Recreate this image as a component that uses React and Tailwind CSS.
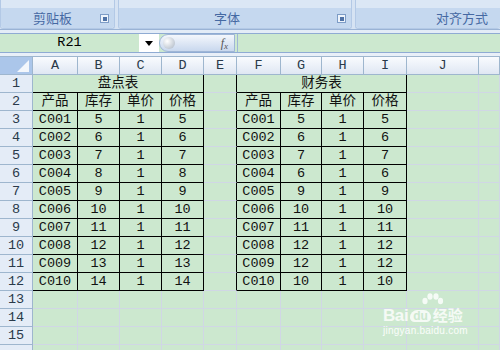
import React from "react";

const left = [
  ["C001", 5, 1, 5],
  ["C002", 6, 1, 6],
  ["C003", 7, 1, 7],
  ["C004", 8, 1, 8],
  ["C005", 9, 1, 9],
  ["C006", 10, 1, 10],
  ["C007", 11, 1, 11],
  ["C008", 12, 1, 12],
  ["C009", 13, 1, 13],
  ["C010", 14, 1, 14],
];

const right = [
  ["C001", 5, 1, 5],
  ["C002", 6, 1, 6],
  ["C003", 7, 1, 7],
  ["C004", 6, 1, 6],
  ["C005", 9, 1, 9],
  ["C006", 10, 1, 10],
  ["C007", 11, 1, 11],
  ["C008", 12, 1, 12],
  ["C009", 12, 1, 12],
  ["C010", 10, 1, 10],
];

const letters = ["A", "B", "C", "D", "E", "F", "G", "H", "I", "J", ""];

function Cell({ children, r, b, span }) {
  return (
    <div
      className={`flex items-center justify-center border-r border-b bg-[#cce8cf] text-[13.5px] text-[#111] leading-none whitespace-nowrap ${
        r ? "border-r-black" : "border-r-[#d0d7e5]"
      } ${b ? "border-b-black" : "border-b-[#d0d7e5]"} ${span ? "col-span-4" : ""}`}
    >
      {children}
    </div>
  );
}

function RowHead({ n }) {
  return (
    <div className="flex items-center justify-center border-r border-b border-[#9eb6ce] bg-[#e4ecf7] text-[13.5px] text-[#2a3a4a] leading-none">
      {n}
    </div>
  );
}

function Launcher() {
  return (
    <svg width="9" height="9" viewBox="0 0 9 9" className="ml-auto">
      <rect x="0.5" y="0.5" width="8" height="8" fill="#eef4fb" stroke="#7d9cc6" />
      <rect x="3" y="3" width="4" height="4" fill="#4f72a6" />
    </svg>
  );
}

function Row({ n }) {
  if (n === 1) {
    return (
      <>
        <RowHead n={n} />
        <Cell span r b>盘点表</Cell>
        <Cell r />
        <Cell span r b>财务表</Cell>
        <Cell />
        <Cell />
      </>
    );
  }
  if (n === 2) {
    const heads = ["产品", "库存", "单价", "价格"];
    return (
      <>
        <RowHead n={n} />
        {heads.map((h) => (
          <Cell key={"l" + h} r b>{h}</Cell>
        ))}
        <Cell r />
        {heads.map((h) => (
          <Cell key={"r" + h} r b>{h}</Cell>
        ))}
        <Cell />
        <Cell />
      </>
    );
  }
  if (n <= 12) {
    const a = left[n - 3];
    const c = right[n - 3];
    return (
      <>
        <RowHead n={n} />
        {a.map((v, i) => (
          <Cell key={"l" + i} r b>{v}</Cell>
        ))}
        <Cell r />
        {c.map((v, i) => (
          <Cell key={"r" + i} r b>{v}</Cell>
        ))}
        <Cell />
        <Cell />
      </>
    );
  }
  return (
    <>
      <RowHead n={n > 15 ? "" : n} />
      {letters.map((l, i) => (
        <Cell key={i} />
      ))}
    </>
  );
}

export default function App() {
  const rows = Array.from({ length: 16 }, (_, i) => i + 1);
  return (
    <div
      className="relative w-[500px] h-[350px] overflow-hidden bg-[#dde8f5]"
      style={{ fontFamily: '"Liberation Mono", "Noto Sans CJK SC", monospace' }}
    >
      {/* Ribbon */}
      <div className="flex h-[30px] gap-[3px] border-b border-[#9ab3d5] bg-[#d6e3f3]">
        <div className="flex w-[115px] flex-col rounded-b-[3px] border-x border-b border-[#b3c9e6] bg-[#dbe7f5]">
          <div className="h-[8px]" />
          <div className="flex flex-1 items-center rounded-b-[3px] bg-[#c5d8ef] pl-[32px] pr-[5px] text-[13px] text-[#4569a3]" style={{ fontFamily: '"Noto Sans CJK SC", sans-serif' }}>
            <span>剪贴板</span>
            <Launcher />
          </div>
        </div>
        <div className="flex w-[234px] flex-col rounded-b-[3px] border-x border-b border-[#b3c9e6] bg-[#dbe7f5]">
          <div className="h-[8px]" />
          <div className="flex flex-1 items-center rounded-b-[3px] bg-[#c5d8ef] pl-[95px] pr-[5px] text-[13px] text-[#4569a3]" style={{ fontFamily: '"Noto Sans CJK SC", sans-serif' }}>
            <span>字体</span>
            <Launcher />
          </div>
        </div>
        <div className="flex flex-1 flex-col rounded-b-[3px] border-l border-b border-[#b3c9e6] bg-[#dbe7f5]">
          <div className="h-[8px]" />
          <div className="flex flex-1 items-center rounded-b-[3px] bg-[#c5d8ef] pl-[80px] text-[13px] text-[#4569a3]" style={{ fontFamily: '"Noto Sans CJK SC", sans-serif' }}>
            <span>对齐方式</span>
          </div>
        </div>
      </div>

      <div className="h-[3px] bg-[#e3ecf7]" />

      {/* Formula bar */}
      <div className="flex h-[20px] border-y border-[#8fabd3] bg-[#cce8cf]">
        <div className="flex w-[139px] items-center justify-center text-[13.5px] text-black">R21</div>
        <div className="flex w-[20px] items-center justify-center bg-white">
          <svg width="8" height="5" viewBox="0 0 8 5">
            <path d="M0 0h8L4 5z" fill="#000" />
          </svg>
        </div>
        <div className="flex w-[76px] items-center rounded-l-full border border-[#9fb6d6] bg-gradient-to-b from-[#f4f7fc] to-[#c9d8ee] pl-[3px] pr-[6px]">
          <div className="h-[12px] w-[12px] rounded-full bg-[radial-gradient(circle_at_35%_35%,#ffffff,#a9b4c2)]" />
          <span className="ml-auto text-[12px] italic text-[#555]" style={{ fontFamily: '"Liberation Serif", serif' }}>
            f<sub className="text-[9px]">x</sub>
          </span>
        </div>
        <div className="ml-[2px] flex-1 border-l border-[#9fb6d6]" />
      </div>

      <div className="h-[3px] bg-[#e8eff8]" />

      {/* Sheet */}
      <div className="grid grid-cols-[33px_45px_42px_42px_42px_33px_44px_41px_42px_43px_72px_1fr] auto-rows-[18px] border-t border-[#9eb6ce]">
        <div className="relative border-r border-b border-[#9eb6ce] bg-[#abc6ea]">
          <svg width="12" height="12" viewBox="0 0 12 12" className="absolute bottom-[2px] right-[3px]">
            <path d="M12 0V12H0z" fill="#ffffff" opacity="0.85" />
          </svg>
        </div>
        {letters.map((l, i) => (
          <div
            key={i}
            className="flex items-center justify-center border-r border-b border-[#9eb6ce] bg-gradient-to-b from-[#f9fbfe] to-[#dfe7f3] text-[13.5px] text-[#2a3a4a] leading-none"
          >
            {l}
          </div>
        ))}
        {rows.map((n) => (
          <Row key={n} n={n} />
        ))}
      </div>

      {/* Watermark */}
      <div className="absolute left-[383px] top-[293px] flex flex-col items-start text-white/80" style={{ fontFamily: '"Liberation Sans", "Noto Sans CJK SC", sans-serif' }}>
        <svg width="24" height="17" viewBox="0 0 24 17" className="ml-[37px]">
          <ellipse cx="5" cy="8" rx="2.6" ry="3.2" fill="#fff" opacity="0.8" />
          <ellipse cx="10" cy="3.5" rx="2.6" ry="3.2" fill="#fff" opacity="0.8" />
          <ellipse cx="16" cy="3.5" rx="2.6" ry="3.2" fill="#fff" opacity="0.8" />
          <ellipse cx="20.5" cy="8" rx="2.6" ry="3.2" fill="#fff" opacity="0.8" />
        </svg>
        <div className="-mt-[3px] flex items-center leading-none">
          <span className="text-[17px] font-bold tracking-tight">Bai</span>
          <span className="mx-[2px] rounded-t-[8px] rounded-b-[5px] bg-white/80 px-[3px] text-[12px] font-bold text-[#cce8cf]">du</span>
          <span className="text-[15px] font-bold">经验</span>
        </div>
        <span className="mt-[2px] text-[10px] leading-none tracking-wide text-white/90">jingyan.baidu.com</span>
      </div>
    </div>
  );
}
